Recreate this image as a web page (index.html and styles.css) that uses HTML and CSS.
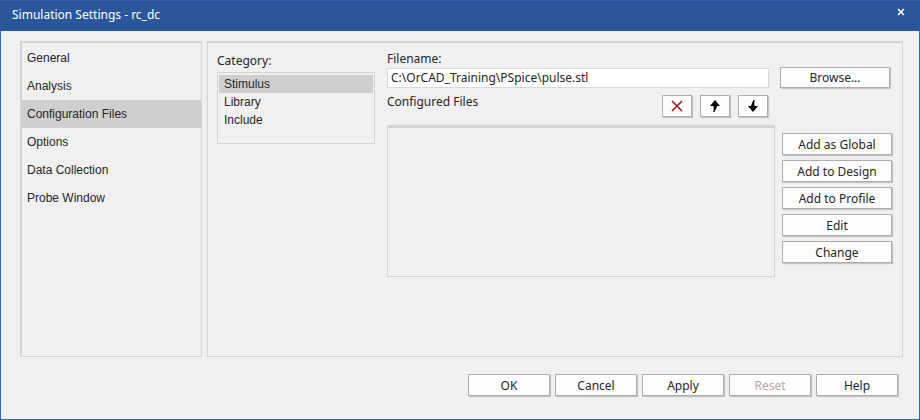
FILE: index.html
```html
<!DOCTYPE html>
<html lang="en">
<head>
    <meta charset="UTF-8">
    <title>Simulation Settings - rc_dc</title>
    <link rel="stylesheet" href="styles.css">
</head>
<body>
    <div class="window">
        <div class="titlebar">
            <span class="title">Simulation Settings - rc_dc</span>
            <svg class="close" width="8" height="8" viewBox="0 0 8 8">
                <path d="M1 1 L7 7 M7 1 L1 7" stroke="#fff" stroke-width="1.6"/>
            </svg>
        </div>

        <div class="content">
            <div class="panels">
                <!-- tab list on the left -->
                <ul class="tabs">
                    <li>General</li>
                    <li>Analysis</li>
                    <li class="selected">Configuration Files</li>
                    <li>Options</li>
                    <li>Data Collection</li>
                    <li>Probe Window</li>
                </ul>

                <div class="page">
                    <div class="category">
                        <div class="label">Category:</div>
                        <ul class="category-list">
                            <li class="selected">Stimulus</li>
                            <li>Library</li>
                            <li>Include</li>
                        </ul>
                    </div>

                    <div class="files">
                        <div class="label">Filename:</div>
                        <div class="file-row">
                            <div class="input">C:\OrCAD_Training\PSpice\pulse.stl</div>
                            <button class="btn browse">Browse...</button>
                        </div>

                        <div class="configured-row">
                            <div class="label">Configured Files</div>
                            <div class="icon-buttons">
                                <button class="btn icon" title="Delete">
                                    <svg width="14" height="14" viewBox="0 0 14 14">
                                        <path d="M2 2 L12 12 M12 2 L2 12" stroke="#a11a1a" stroke-width="1.6"/>
                                    </svg>
                                </button>
                                <button class="btn icon" title="Move Up">
                                    <svg width="12" height="12" viewBox="0 0 12 12">
                                        <path d="M6 0 L11 6 L8 6 C7.6 8 6.6 10 5.4 12 L4.2 12 C4.8 10 4.8 8 4.4 6 L1 6 Z" fill="#000"/>
                                    </svg>
                                </button>
                                <button class="btn icon" title="Move Down">
                                    <svg width="12" height="12" viewBox="0 0 12 12">
                                        <path d="M6 12 L11 6 L7.6 6 C7.2 4 7.2 2 7.8 0 L6.6 0 C5.4 2 4.4 4 4 6 L1 6 Z" fill="#000"/>
                                    </svg>
                                </button>
                            </div>
                        </div>

                        <div class="list-row">
                            <div class="file-list"></div>
                            <div class="side-buttons">
                                <button class="btn">Add as Global</button>
                                <button class="btn">Add to Design</button>
                                <button class="btn">Add to Profile</button>
                                <button class="btn">Edit</button>
                                <button class="btn">Change</button>
                            </div>
                        </div>
                    </div>
                </div>
            </div>

            <div class="footer">
                <button class="btn">OK</button>
                <button class="btn">Cancel</button>
                <button class="btn">Apply</button>
                <button class="btn" disabled>Reset</button>
                <button class="btn">Help</button>
            </div>
        </div>
    </div>
</body>
</html>
```

FILE: styles.css
```css
body {
    margin: 0;
    background: #f0f0f0;
    font-family: "Noto Sans", sans-serif;
    font-size: 12px;
    color: #262626;
}
ul {
    margin: 0;
    padding: 0;
    list-style: none;
}
.window {
    box-sizing: border-box;
    width: 920px;
    height: 420px;
    border: 1px solid #1c6bc9;
    border-top: none;
    background: #f0f0f0;
}
.titlebar {
    height: 31px;
    margin: 0 -1px;
    background: #2b579a;
    border-top: 1px solid #2f64b0;
    box-sizing: border-box;
    display: flex;
    align-items: center;
    justify-content: space-between;
    padding: 0 15px 4px 12px;
    color: #fff;
}
.title {
    font-size: 12px;
}
.close {
    margin-top: -4px;
}
.content {
    padding: 10px 16px 0 19px;
}
.panels {
    display: flex;
    gap: 5px;
    height: 316px;
}
.tabs {
    box-sizing: border-box;
    width: 182px;
    border: 1px solid #d4d4d4;
    border-top-width: 2px;
    border-left-width: 2px;
    padding-top: 1px;
    font-family: "Liberation Sans", Arial, sans-serif;
}
.tabs li {
    height: 28px;
    line-height: 28px;
    padding-left: 5px;
}
.tabs li.selected {
    background: #cfcfcf;
}
.page {
    box-sizing: border-box;
    flex: 1;
    border: 1px solid #d4d4d4;
    border-top-width: 2px;
    padding: 8px 0 0 9px;
    display: flex;
    gap: 12px;
}
.label {
    line-height: 16px;
}
.category .label {
    margin-top: 2px;
}
.category-list {
    box-sizing: border-box;
    width: 158px;
    height: 72px;
    margin-top: 3px;
    border: 1px solid #d2d2d2;
    padding: 2px 1px;
    font-family: "Liberation Sans", Arial, sans-serif;
}
.category-list li {
    height: 18px;
    line-height: 18px;
    padding-left: 5px;
}
.category-list li.selected {
    background: #cfcfcf;
}
.files {
    width: 506px;
}
.file-row {
    display: flex;
    align-items: center;
    height: 21px;
}
.input {
    box-sizing: border-box;
    width: 382px;
    height: 20px;
    line-height: 18px;
    background: #fff;
    border: 1px solid #d9d9d9;
    padding-left: 3px;
}
.btn {
    box-sizing: border-box;
    height: 21px;
    padding: 0;
    background: #fdfdfd;
    border: 1px solid #adadad;
    border-radius: 0;
    box-shadow: 1px 1px 1px rgba(0, 0, 0, 0.18);
    font-family: "Noto Sans", sans-serif;
    font-size: 12px;
    color: #262626;
}
.btn:disabled {
    color: #b0a8a8;
}
.browse {
    width: 110px;
    margin-left: 11px;
}
.configured-row {
    display: flex;
    justify-content: space-between;
    width: 381px;
    margin-top: 7px;
}
.configured-row .label {
    margin-top: -1px;
}
.icon-buttons {
    display: flex;
    gap: 8px;
}
.btn.icon {
    width: 30px;
    height: 22px;
    display: flex;
    align-items: center;
    justify-content: center;
}
.list-row {
    display: flex;
    margin-top: 8px;
}
.file-list {
    box-sizing: border-box;
    width: 388px;
    height: 152px;
    border: 1px solid #d4d4d4;
    border-top-width: 3px;
}
.side-buttons {
    display: flex;
    flex-direction: column;
    gap: 5px;
    margin: 8px 0 0 7px;
}
.side-buttons .btn {
    width: 110px;
    height: 22px;
}
.footer {
    display: flex;
    justify-content: flex-end;
    gap: 5px;
    margin-top: 17px;
    padding-right: 5px;
}
.footer .btn {
    width: 82px;
    height: 22px;
}
```
